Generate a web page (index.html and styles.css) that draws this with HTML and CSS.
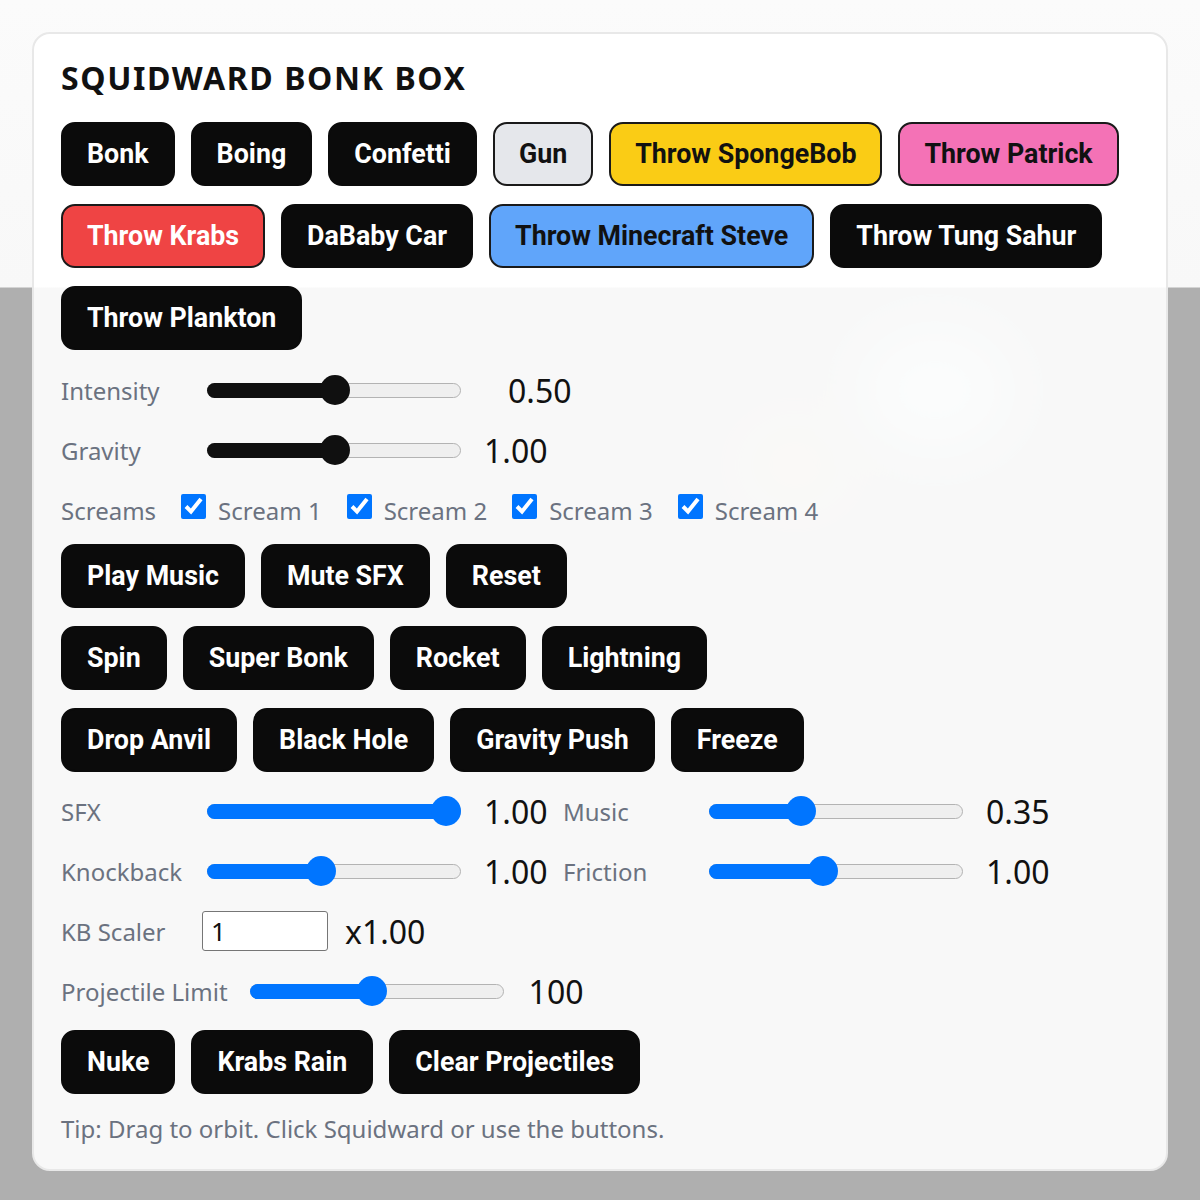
FILE: index.html
```html
<!DOCTYPE html>
<html lang="en">
<head>
<meta charset="utf-8">
<title>Squidward Bonk Box</title>
<link rel="stylesheet" href="styles.css">
</head>
<body>
<div class="scene">
  <div class="blob blob-a"></div>
  <div class="blob blob-b"></div>
  <div class="panel">
    <h1 class="title">SQUIDWARD BONK BOX</h1>

    <div class="btns">
      <button class="btn">Bonk</button>
      <button class="btn">Boing</button>
      <button class="btn">Confetti</button>
      <button class="btn btn-gray">Gun</button>
      <button class="btn btn-yellow">Throw SpongeBob</button>
      <button class="btn btn-pink">Throw Patrick</button>
      <button class="btn btn-red">Throw Krabs</button>
      <button class="btn">DaBaby Car</button>
      <button class="btn btn-blue">Throw Minecraft Steve</button>
      <button class="btn">Throw Tung Sahur</button>
      <button class="btn">Throw Plankton</button>
    </div>

    <div class="row row-first">
      <span class="lbl">Intensity</span>
      <div class="slider dark">
        <div class="track"></div>
        <div class="fill" style="width:50%"></div>
        <div class="thumb" style="left:113px"></div>
      </div>
      <span class="val val-wide">0.50</span>
    </div>

    <div class="row">
      <span class="lbl">Gravity</span>
      <div class="slider dark">
        <div class="track"></div>
        <div class="fill" style="width:50%"></div>
        <div class="thumb" style="left:113px"></div>
      </div>
      <span class="val">1.00</span>
    </div>

    <div class="row row-screams">
      <span class="lbl-auto">Screams</span>
      <label class="chk"><input type="checkbox" checked><span>Scream 1</span></label>
      <label class="chk"><input type="checkbox" checked><span>Scream 2</span></label>
      <label class="chk"><input type="checkbox" checked><span>Scream 3</span></label>
      <label class="chk"><input type="checkbox" checked><span>Scream 4</span></label>
    </div>

    <div class="btns btns-mid">
      <button class="btn">Play Music</button>
      <button class="btn">Mute SFX</button>
      <button class="btn">Reset</button>
    </div>
    <div class="btns btns-next">
      <button class="btn">Spin</button>
      <button class="btn">Super Bonk</button>
      <button class="btn">Rocket</button>
      <button class="btn">Lightning</button>
    </div>
    <div class="btns btns-next">
      <button class="btn">Drop Anvil</button>
      <button class="btn">Black Hole</button>
      <button class="btn">Gravity Push</button>
      <button class="btn">Freeze</button>
    </div>

    <div class="row row-sfx">
      <span class="lbl">SFX</span>
      <div class="slider">
        <div class="track"></div>
        <div class="fill" style="width:94%"></div>
        <div class="thumb" style="left:224px"></div>
      </div>
      <span class="val val-fixed">1.00</span>
      <span class="lbl lbl2">Music</span>
      <div class="slider">
        <div class="track"></div>
        <div class="fill" style="width:37%"></div>
        <div class="thumb" style="left:77px"></div>
      </div>
      <span class="val">0.35</span>
    </div>

    <div class="row">
      <span class="lbl">Knockback</span>
      <div class="slider">
        <div class="track"></div>
        <div class="fill" style="width:44%"></div>
        <div class="thumb" style="left:99px"></div>
      </div>
      <span class="val val-fixed">1.00</span>
      <span class="lbl lbl2">Friction</span>
      <div class="slider">
        <div class="track"></div>
        <div class="fill" style="width:44%"></div>
        <div class="thumb" style="left:99px"></div>
      </div>
      <span class="val">1.00</span>
    </div>

    <div class="row">
      <span class="lbl lbl-kb">KB Scaler</span>
      <input class="num" type="text" value="1">
      <span class="val val-x">x1.00</span>
    </div>

    <div class="row">
      <span class="lbl-auto lbl-proj">Projectile Limit</span>
      <div class="slider">
        <div class="track"></div>
        <div class="fill" style="width:48%"></div>
        <div class="thumb" style="left:107px"></div>
      </div>
      <span class="val val-proj">100</span>
    </div>

    <div class="btns btns-end">
      <button class="btn">Nuke</button>
      <button class="btn">Krabs Rain</button>
      <button class="btn">Clear Projectiles</button>
    </div>

    <p class="tip">Tip: Drag to orbit. Click Squidward or use the buttons.</p>
  </div>
</div>
</body>
</html>
```

FILE: styles.css
```css
* { box-sizing: border-box; }

html, body {
  margin: 0;
  padding: 0;
}

body {
  font-family: "Noto Sans", "Open Sans", sans-serif;
  background: linear-gradient(to bottom, #fbfbfb 0, #f8f8f8 287px, #afafaf 288px, #afafaf 100%);
  min-height: 1200px;
}

.scene {
  position: relative;
  padding: 32px;
  min-height: 1200px;
}

.blob {
  position: absolute;
  border-radius: 50%;
  filter: blur(30px);
}

.blob-a {
  left: 740px;
  top: 420px;
  width: 110px;
  height: 90px;
  background: rgba(250, 215, 120, 0.3);
}

.blob-b {
  left: 860px;
  top: 330px;
  width: 150px;
  height: 120px;
  background: rgba(225, 250, 250, 0.6);
}

.panel {
  position: relative;
  width: 1136px;
  border: 2px solid #e8e8e8;
  border-radius: 18px;
  background: rgba(255, 255, 255, 0.915);
  padding: 25px 27px 24px;
}

.title {
  margin: 0 0 25px;
  font-size: 32px;
  line-height: 38px;
  font-weight: 700;
  letter-spacing: 1.6px;
  color: #111;
}

.btns {
  display: flex;
  flex-wrap: wrap;
  gap: 18px 16px;
}

.btns-mid {
  margin-top: 12px;
}

.btns-next {
  margin-top: 18px;
}

.btns-end {
  margin-top: 17px;
}

.btn {
  font-family: Roboto, "Noto Sans", sans-serif;
  font-weight: 700;
  font-size: 26.8px;
  line-height: 30px;
  padding: 15px 24px;
  border: 2px solid #0b0b0b;
  border-radius: 14px;
  background: #0b0b0b;
  color: #fff;
  cursor: pointer;
}

.btn-gray { background: #e5e7eb; color: #111; border-color: #1a1a1a; }
.btn-yellow { background: #facc15; color: #111; border-color: #1a1a1a; }
.btn-pink { background: #f472b6; color: #111; border-color: #1a1a1a; }
.btn-red { background: #ef4444; color: #fff; border-color: #1a1a1a; }
.btn-blue { background: #60a5fa; color: #111; border-color: #1a1a1a; }

.row {
  display: flex;
  align-items: center;
  height: 44px;
  margin-top: 16px;
}

.row-first { margin-top: 18px; }
.row-sfx { margin-top: 17px; }

.lbl, .lbl-auto {
  font-size: 24px;
  color: #6b7280;
  white-space: nowrap;
  flex: none;
}

.lbl { width: 146px; }
.lbl2 { margin-left: 17px; }
.lbl-kb { width: 141px; }
.lbl-proj { margin-right: 22px; }

.slider {
  position: relative;
  width: 254px;
  height: 30px;
  flex: none;
  display: flex;
  align-items: center;
  --c: #0075ff;
}

.slider.dark { --c: #101010; }

.track {
  width: 100%;
  height: 15px;
  border: 1px solid #b3b3b3;
  border-radius: 8px;
  background: #efefef;
}

.fill {
  position: absolute;
  left: 0;
  top: 7.5px;
  height: 15px;
  border-radius: 8px;
  background: var(--c);
}

.thumb {
  position: absolute;
  top: 0;
  width: 30px;
  height: 30px;
  border-radius: 50%;
  background: var(--c);
}

.val {
  font-size: 32px;
  color: #111;
  margin-left: 23px;
  white-space: nowrap;
}

.val-wide { margin-left: 47px; }
.val-fixed { width: 62px; flex: none; }
.val-x { margin-left: 17px; }
.val-proj { margin-left: 25px; }

.row-screams {
  gap: 25px;
}

.chk {
  display: flex;
  align-items: center;
  font-size: 24px;
  color: #6b7280;
}

.chk input {
  width: 25px;
  height: 25px;
  margin: 0 12px 8px 0;
  accent-color: #0075ff;
}

.num {
  width: 126px;
  height: 40px;
  border: 1px solid #767676;
  border-radius: 3px;
  background: #fff;
  font-family: "Noto Sans", sans-serif;
  font-size: 26px;
  padding: 0 8px;
  color: #111;
}

.tip {
  margin: 18px 0 0;
  font-size: 24px;
  line-height: 33px;
  color: #6b7280;
}
```
